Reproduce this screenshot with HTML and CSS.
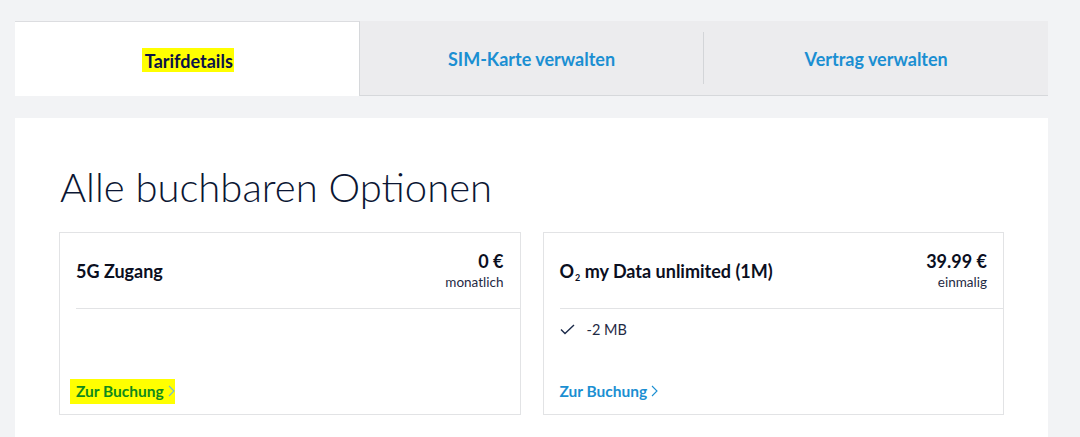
FILE: index.html
```html
<!DOCTYPE html>
<html lang="de">
<head>
<meta charset="utf-8">
<title>Alle buchbaren Optionen</title>
<link rel="stylesheet" href="styles.css">
</head>
<body>
<div class="page">
  <nav class="tabs">
    <div class="tab active"><span class="mark mark-tab">Tarifdetails</span></div>
    <div class="tab"><span>SIM-Karte verwalten</span></div>
    <div class="tab tab-last"><span>Vertrag verwalten</span></div>
  </nav>
  <main class="panel">
    <h1 class="heading">Alle buchbaren Optionen</h1>
    <div class="cards">
      <section class="card">
        <div class="card-head">
          <div class="card-title">5G Zugang</div>
          <div class="price">
            <div class="price-value">0 €</div>
            <div class="price-unit">monatlich</div>
          </div>
        </div>
        <div class="card-body">
          <ul class="features"></ul>
          <a class="book" href="#"><span class="mark mark-book">Zur Buchung <svg class="chev" width="7" height="12" viewBox="0 0 7 12"><polyline points="1,1 6,6 1,11" fill="none" stroke="#6fb6e0" stroke-width="1.1"/></svg></span></a>
        </div>
      </section>
      <section class="card">
        <div class="card-head">
          <div class="card-title">O<sub class="sub">2</sub> my Data unlimited (1M)</div>
          <div class="price">
            <div class="price-value">39.99 €</div>
            <div class="price-unit">einmalig</div>
          </div>
        </div>
        <div class="card-body">
          <ul class="features">
            <li class="feature"><svg class="check" width="15" height="11" viewBox="0 0 15 11"><polyline points="1,5.5 5,9.5 14,1" fill="none" stroke="#1b2a4a" stroke-width="1.4"/></svg><span>-2 MB</span></li>
          </ul>
          <a class="book" href="#">Zur Buchung <svg class="chev" width="7" height="12" viewBox="0 0 7 12"><polyline points="1,1 6,6 1,11" fill="none" stroke="#1b8fd2" stroke-width="1.1"/></svg></a>
        </div>
      </section>
    </div>
  </main>
</div>
</body>
</html>
```
FILE: styles.css
```css
html, body {
  margin: 0;
  padding: 0;
}
body {
  background: #f2f3f5;
  font-family: Lato, "Open Sans", sans-serif;
  color: #0b1633;
  height: 437px;
  overflow: hidden;
}
.page {
  width: 1033px;
  margin-left: 15px;
  padding-top: 21px;
}
.tabs {
  display: flex;
  background: #ececee;
  border-bottom: 1px solid #d6d8db;
  height: 74px;
}
.tab {
  flex: 1;
  display: flex;
  align-items: center;
  justify-content: center;
  font-weight: 700;
  font-size: 18px;
  color: #1b8fd2;
  padding-top: 2px;
}
.tab.active {
  background: #ffffff;
  color: #0b1248;
  border-right: 1px solid #d6d8db;
  border-top: 1px solid #dcdde0;
  margin-bottom: -1px;
}
.tab-last {
  border-left: 1px solid #d3d5d8;
  margin: 11px 0;
}
.mark {
  background: #ffff00;
}
.mark-tab {
  padding: 2px 1px 0 3px;
  margin-left: 2px;
}
.panel {
  background: #ffffff;
  margin-top: 22px;
  padding: 44px 44px 0;
  height: 319px;
  box-sizing: border-box;
}
.heading {
  margin: 0 0 20px 1px;
  font-weight: 300;
  font-size: 40px;
  line-height: 50px;
  color: #0b1633;
}
.cards {
  display: flex;
  gap: 22px;
}
.card {
  flex: 1;
  border: 1px solid #e2e3e5;
  height: 181px;
  display: flex;
  flex-direction: column;
}
.card-head {
  margin-left: 16px;
  padding: 0 16px 0 0;
  height: 75px;
  border-bottom: 1px solid #e2e3e5;
  display: flex;
  justify-content: space-between;
  align-items: center;
}
.card-title {
  font-weight: 700;
  font-size: 18px;
  color: #0b0f1f;
  padding-top: 1px;
}
.sub {
  font-size: 9px;
  vertical-align: -3px;
  line-height: 0;
  margin-left: 1px;
}
.price {
  text-align: right;
}
.price-value {
  font-weight: 700;
  font-size: 18px;
  color: #0b0f1f;
  line-height: 20px;
}
.price-unit {
  font-size: 13.5px;
  color: #1f2a44;
  line-height: 18px;
  margin-top: 2px;
}
.card-body {
  flex: 1;
  display: flex;
  flex-direction: column;
  padding: 12px 16px 14px;
}
.features {
  list-style: none;
  margin: 0;
  padding: 0;
}
.feature {
  display: flex;
  align-items: center;
  gap: 12px;
  font-size: 14.5px;
  color: #1f2a44;
}
.book {
  margin-top: auto;
  font-weight: 700;
  font-size: 15.5px;
  color: #1b8fd2;
  text-decoration: none;
  display: flex;
  align-items: center;
}
.chev {
  margin-left: 4px;
}
.mark-book {
  color: #0f8a1c;
  padding: 3px 0 4px 6px;
  margin: -3px 0 -4px -6px;
  display: inline-flex;
  align-items: center;
}
```
